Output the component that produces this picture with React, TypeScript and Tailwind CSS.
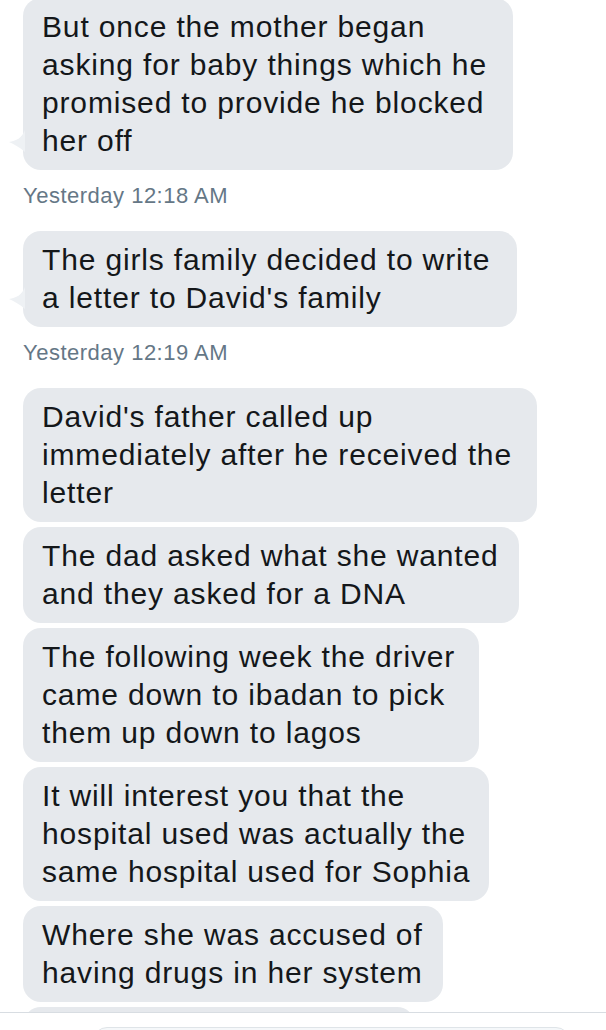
import React from "react";

type Msg = { lines: string[]; width: string; tail?: boolean; time?: string };

const messages: Msg[] = [
  {
    lines: [
      "But once the mother began",
      "asking for baby things which he",
      "promised to provide he blocked",
      "her off",
    ],
    width: "w-[490px]",
    tail: true,
    time: "Yesterday 12:18 AM",
  },
  {
    lines: ["The girls family decided to write", "a letter to David's family"],
    width: "w-[494px]",
    tail: true,
    time: "Yesterday 12:19 AM",
  },
  {
    lines: ["David's father called up", "immediately after he received the", "letter"],
    width: "w-[514px]",
  },
  {
    lines: ["The dad asked what she wanted", "and they asked for a DNA"],
    width: "w-[496px]",
  },
  {
    lines: ["The following week the driver", "came down to ibadan to pick", "them up down to lagos"],
    width: "w-[456px]",
  },
  {
    lines: ["It will interest you that the", "hospital used was actually the", "same hospital used for Sophia"],
    width: "w-[466px]",
  },
  {
    lines: ["Where she was accused of", "having drugs in her system"],
    width: "w-[420px]",
  },
  // next message, only its top edge shows above the composer
  {
    lines: [],
    width: "w-[392px] h-[40px]",
  },
];

function Tail() {
  return (
    <svg
      className="absolute -left-[15px] bottom-[18px]"
      width="17"
      height="22"
      viewBox="0 0 17 22"
    >
      <path d="M17 0 C14 8 8 11 1 12 C6 14 11 17 17 22 Z" fill="#eef1f4" />
    </svg>
  );
}

function Bubble({ msg }: { msg: Msg }) {
  return (
    <div className={`relative ${msg.width} rounded-[18px] bg-[#e6e9ed] px-[19px] py-[10px]`}>
      {msg.tail && <Tail />}
      {msg.lines.map((line, i) => (
        <div
          key={i}
          className="whitespace-nowrap text-[30px] leading-[38px] tracking-[0.85px] text-[#14171a]"
        >
          {line}
        </div>
      ))}
    </div>
  );
}

export default function App() {
  return (
    <div
      className="h-[1030px] w-[606px] overflow-hidden bg-white"
      style={{ fontFamily: "'Liberation Sans', Arial, sans-serif" }}
    >
      <div className="h-[1012px] overflow-hidden">
        <div className="-mt-[2px] flex flex-col pl-[23px]">
          {messages.map((m, i) => (
            <React.Fragment key={i}>
              <div className={i > 0 && !messages[i - 1].time ? "mt-[5px]" : ""}>
                <Bubble msg={m} />
              </div>
              {m.time && (
                <div className="mt-[14px] mb-[23px] text-[22px] leading-[24px] tracking-[0.5px] text-[#657786]">
                  {m.time}
                </div>
              )}
            </React.Fragment>
          ))}
        </div>
      </div>
      <div className="h-[18px] border-t border-[#d8dde2] bg-white pt-[14px] pl-[93px]">
        <div className="h-[30px] w-[477px] rounded-t-[14px] border border-[#dfe4e8] bg-[#f5f8fa]" />
      </div>
    </div>
  );
}
